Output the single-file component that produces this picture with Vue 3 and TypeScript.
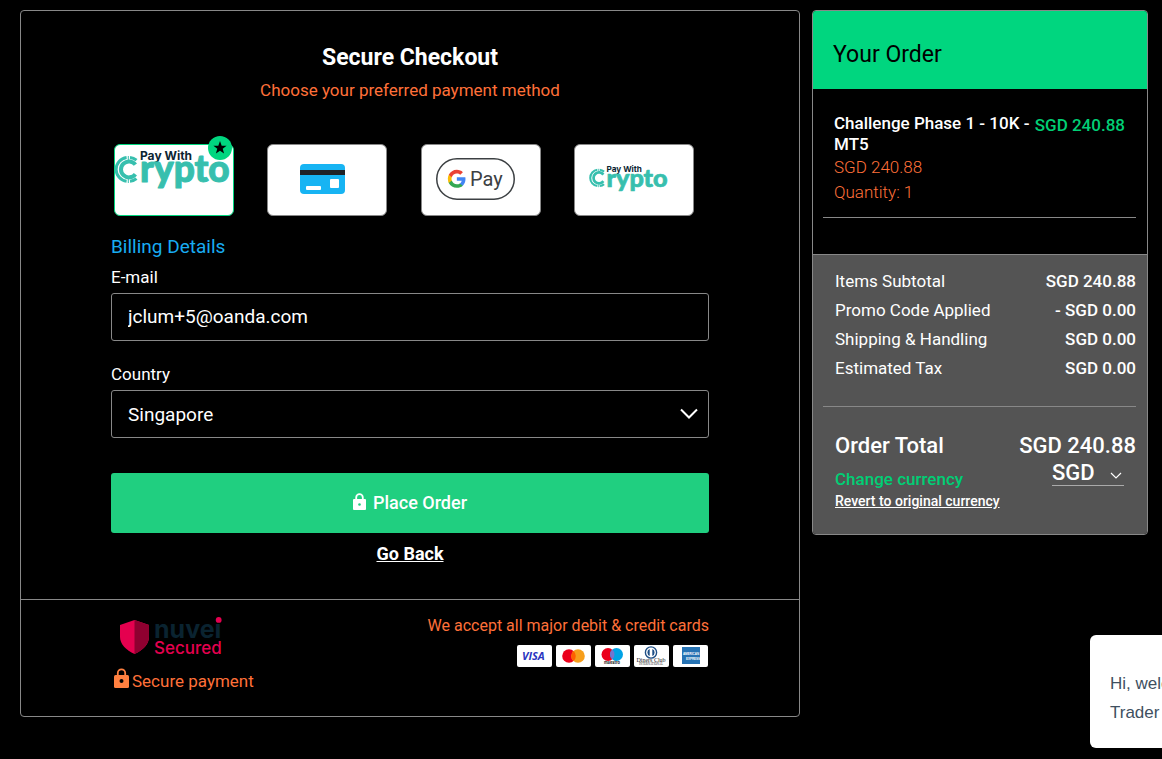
<script setup lang="ts">
import { ref } from 'vue'

type MethodId = 'crypto-preferred' | 'card' | 'gpay' | 'crypto'

interface Method {
  id: MethodId
  label: string
}

interface SummaryRow {
  label: string
  amount: string
}

const methods: Method[] = [
  { id: 'crypto-preferred', label: 'Pay With Crypto (preferred)' },
  { id: 'card', label: 'Credit or debit card' },
  { id: 'gpay', label: 'Google Pay' },
  { id: 'crypto', label: 'Pay With Crypto' },
]

const rows: SummaryRow[] = [
  { label: 'Items Subtotal', amount: 'SGD 240.88' },
  { label: 'Promo Code Applied', amount: '- SGD 0.00' },
  { label: 'Shipping & Handling', amount: 'SGD 0.00' },
  { label: 'Estimated Tax', amount: 'SGD 0.00' },
]

const selected = ref<MethodId>('crypto-preferred')
const email = ref('jclum+5@oanda.com')
const country = ref('Singapore')
const currency = ref('SGD')
</script>

<template>
  <div class="page">
    <main class="checkout">
      <form class="form" @submit.prevent>
        <h1 class="title">Secure Checkout</h1>
        <p class="subtitle">Choose your preferred payment method</p>

        <div class="methods" role="radiogroup" aria-label="Payment method">
          <label
            v-for="m in methods"
            :key="m.id"
            class="method"
            :class="{ active: selected === m.id }"
          >
            <input v-model="selected" class="radio" type="radio" name="method" :value="m.id" :aria-label="m.label" />
            <svg
              v-if="m.id === 'crypto-preferred' || m.id === 'crypto'"
              class="crypto"
              :class="{ large: m.id === 'crypto-preferred' }"
              viewBox="0 0 116 44"
              aria-hidden="true"
            >
              <g fill="none" stroke="#37bfae">
                <path d="M21.500 11.200A12 12 0 0 0 15 8.500M11.600 8.500A12 12 0 0 0 11.600 32.300M15 32.300A12 12 0 0 0 21.500 29.600" stroke-width="3" />
                <path d="M20.400 15.600A8 8 0 1 0 20.400 25.200" stroke-width="4" />
                <path d="M13.300 7v4M13.300 30v4" stroke-width="1" />
              </g>
              <text class="crypto-top" x="25" y="11">Pay With</text>
              <text class="crypto-word" x="25" y="33">rypto</text>
            </svg>
            <svg v-else-if="m.id === 'card'" class="credit" viewBox="0 0 45 30" aria-hidden="true">
              <rect width="45" height="30" rx="4" fill="#17b4f3" />
              <rect y="6" width="45" height="5" fill="#1f2226" />
              <rect x="30" y="15" width="9" height="9" rx="1" fill="#fff" />
              <rect x="6" y="22" width="15" height="4" rx="1" fill="#fff" />
            </svg>
            <svg v-else class="gpay" viewBox="0 0 79 42" aria-hidden="true">
              <rect x="0.75" y="0.75" width="77.5" height="40.500" rx="20.250" fill="#fff" stroke="#3c4043" stroke-width="1.500" />
              <g transform="translate(11 11) scale(0.41)">
                <path fill="#4285f4" d="M45.12 24.5c0-1.56-.14-3.06-.4-4.5H24v8.51h11.84c-.51 2.75-2.06 5.08-4.39 6.64v5.52h7.11c4.16-3.83 6.56-9.47 6.56-16.17z" />
                <path fill="#34a853" d="M24 46c5.94 0 10.92-1.97 14.56-5.33l-7.11-5.52c-1.97 1.32-4.49 2.1-7.45 2.1-5.73 0-10.58-3.87-12.31-9.07H4.34v5.7C7.96 41.07 15.4 46 24 46z" />
                <path fill="#fbbc05" d="M11.69 28.18C11.25 26.86 11 25.45 11 24s.25-2.86.69-4.18v-5.7H4.34C2.85 17.09 2 20.45 2 24c0 3.55.85 6.91 2.34 9.88l7.35-5.7z" />
                <path fill="#ea4335" d="M24 10.75c3.23 0 6.13 1.11 8.41 3.29l6.31-6.31C34.91 4.18 29.93 2 24 2 15.4 2 7.96 6.93 4.34 14.12l7.35 5.7c1.73-5.2 6.58-9.07 12.31-9.07z" />
              </g>
              <text class="gpay-word" x="34" y="28">Pay</text>
            </svg>
            <svg v-if="m.id === 'crypto-preferred'" class="badge" viewBox="0 0 24 24" aria-hidden="true">
              <circle cx="12" cy="12" r="12" fill="#00d67f" />
              <path d="M12 5l1.700 4.700 4.900.1-3.900 3 1.400 4.800L12 14.800l-4.100 2.800 1.400-4.800-3.900-3 4.900-.1z" fill="#000" />
            </svg>
          </label>
        </div>

        <h2 class="billing">Billing Details</h2>

        <label class="label" for="email">E-mail</label>
        <input id="email" v-model="email" class="control email" type="email" />

        <label class="label spaced" for="country">Country</label>
        <div class="select-wrap">
          <select id="country" v-model="country" class="control">
            <option>Singapore</option>
          </select>
          <svg class="chevron" viewBox="0 0 18 12" aria-hidden="true">
            <path d="M1 1.500l8 8 8-8" fill="none" stroke="#fff" stroke-width="2" />
          </svg>
        </div>

        <button class="place" type="submit">
          <svg class="place-lock" viewBox="0 0 13 17" aria-hidden="true">
            <path d="M3.200 7V4.500a3.300 3.300 0 0 1 6.600 0V7" fill="none" stroke="#fff" stroke-width="1.800" />
            <rect y="6" width="13" height="11" rx="1" fill="#fff" />
            <circle cx="6.500" cy="11.500" r="1.300" fill="#20cf80" />
          </svg>
          Place Order
        </button>
        <a class="back" href="#">Go Back</a>
      </form>

      <footer class="footer">
        <div class="secure">
          <svg class="nuvei" viewBox="0 0 106 42" role="img" aria-label="nuvei Secured">
            <path d="M15.500 3L30 8v12c0 7-6 13-14.500 17C7 33 1 27 1 20V8z" fill="#e5004f" />
            <path d="M15.500 3L30 8v12c0 7-6 13-14.500 17z" fill="#8f0030" />
            <text class="nuvei-word" x="35" y="21">nuvei</text>
            <circle cx="99.700" cy="2.900" r="2.900" fill="#e5004f" />
            <text class="nuvei-sub" x="35" y="37">Secured</text>
          </svg>
          <p class="secure-line">
            <svg class="secure-lock" viewBox="0 0 15 20" aria-hidden="true">
              <path d="M3.800 8V5a3.700 3.700 0 0 1 7.400 0v3" fill="none" stroke="#ff8040" stroke-width="1.800" />
              <rect y="7" width="15" height="13" rx="1.500" fill="#ff8040" />
              <circle cx="7.500" cy="13" r="2" fill="#000" />
            </svg>
            Secure payment
          </p>
        </div>
        <div class="accept">
          <p class="accept-text">We accept all major debit &amp; credit cards</p>
          <div class="brands">
            <svg class="brand" viewBox="0 0 35 22" role="img" aria-label="Visa">
              <text class="visa" x="5" y="15">VISA</text>
            </svg>
            <svg class="brand" viewBox="0 0 35 22" role="img" aria-label="Mastercard">
              <circle cx="13" cy="11" r="6.800" fill="#eb001b" />
              <circle cx="22" cy="11" r="6.800" fill="#f79e1b" />
              <path d="M17.500 5.900a6.800 6.800 0 0 1 0 10.200 6.800 6.800 0 0 1 0-10.200z" fill="#ff5f00" />
            </svg>
            <svg class="brand" viewBox="0 0 35 22" role="img" aria-label="Maestro">
              <circle cx="13" cy="9.500" r="6.500" fill="#eb001b" />
              <circle cx="21.500" cy="9.500" r="6.500" fill="#00a2e5" />
              <path d="M17.250 4.600a6.500 6.500 0 0 1 0 9.800 6.500 6.500 0 0 1 0-9.800z" fill="#7375cf" />
              <text class="maestro" x="17" y="19">maestro</text>
            </svg>
            <svg class="brand" viewBox="0 0 35 22" role="img" aria-label="Diners Club International">
              <circle cx="17" cy="7.500" r="5.600" fill="#fff" stroke="#1f4f86" stroke-width="1.400" />
              <path d="M15.700 4a3.800 3.800 0 0 0 0 7zM18.300 4a3.800 3.800 0 0 1 0 7z" fill="#1f4f86" />
              <text class="diners" x="17" y="17">Diners Club</text>
              <text class="diners-sub" x="17" y="20">INTERNATIONAL</text>
            </svg>
            <svg class="brand" viewBox="0 0 35 22" role="img" aria-label="American Express">
              <rect x="9" y="2" width="18" height="17" fill="#2673b4" />
              <text class="amex" x="18" y="10">AMERICAN</text>
              <text class="amex" x="20" y="15">EXPRESS</text>
            </svg>
          </div>
        </div>
      </footer>
    </main>

    <aside class="order">
      <h2 class="order-head">Your Order</h2>
      <section class="item">
        <div class="item-info">
          <h3 class="item-name">Challenge Phase 1 - 10K - MT5</h3>
          <p class="item-meta">SGD 240.88</p>
          <p class="item-meta qty">Quantity: 1</p>
        </div>
        <strong class="item-price">SGD 240.88</strong>
      </section>
      <section class="summary">
        <dl class="rows">
          <div v-for="r in rows" :key="r.label" class="row">
            <dt>{{ r.label }}</dt>
            <dd>{{ r.amount }}</dd>
          </div>
        </dl>
        <div class="total">
          <span>Order Total</span>
          <span>SGD 240.88</span>
        </div>
        <div class="currency">
          <div class="currency-text">
            <label class="change" for="currency">Change currency</label>
            <a class="revert" href="#">Revert to original currency</a>
          </div>
          <div class="currency-pick">
            <select id="currency" v-model="currency" class="currency-select">
              <option>SGD</option>
            </select>
            <svg class="currency-chevron" viewBox="0 0 12 8" aria-hidden="true">
              <path d="M1 1l5 5 5-5" fill="none" stroke="#fff" stroke-width="1.200" />
            </svg>
          </div>
        </div>
      </section>
    </aside>

    <div class="chat">
      <p>Hi, welcome</p>
      <p>Trader</p>
    </div>
  </div>
</template>

<style>
html,
body {
  background: #000;
}
body {
  overflow: hidden;
}
</style>

<style scoped>
* {
  box-sizing: border-box;
}
h1,
h2,
h3,
p,
dl,
dd {
  margin: 0;
}
svg {
  display: block;
  flex: none;
  overflow: visible;
}
.page {
  display: grid;
  grid-template-columns: minmax(0, 1fr) 336px;
  align-items: start;
  gap: 12px;
  padding: 10px 14px 10px 20px;
  background: #000;
  color: #fff;
  font-family: Roboto, 'Liberation Sans', sans-serif;
  font-size: 17px;
  line-height: 20px;
}
.checkout {
  border: 1px solid #888;
  border-radius: 4px;
}
.form {
  display: flex;
  flex-direction: column;
  padding: 33px 90px 33px;
  border-bottom: 1px solid #888;
}
.title {
  font-size: 23px;
  line-height: 28px;
  font-weight: 700;
  text-align: center;
}
.subtitle {
  margin-top: 8px;
  color: #ff7039;
  text-align: center;
}
.methods {
  display: flex;
  justify-content: space-between;
  margin-top: 44px;
  padding: 0 15px 0 3px;
}
.method {
  position: relative;
  display: flex;
  align-items: center;
  width: 120px;
  height: 72px;
  padding: 0 0 2px 14px;
  border: 1px solid #888;
  border-radius: 6px;
  background: #fff;
  cursor: pointer;
}
.method.active {
  border-color: #00d67f;
}
.radio {
  position: absolute;
  inset: 0;
  margin: 0;
  opacity: 0;
}
.crypto {
  width: 80px;
  height: 30px;
}
.method:has(.large) {
  align-items: flex-start;
  padding: 4px 0 0;
}
.crypto.large {
  width: 116px;
  height: 44px;
}
.crypto-top {
  fill: #0b2532;
  font: 700 12px Inter, sans-serif;
}
.crypto-word {
  fill: #37bfae;
  stroke: #37bfae;
  stroke-width: 1px;
  stroke-linejoin: round;
  font: 900 37px Lato, sans-serif;
}
.credit {
  width: 45px;
  height: 30px;
  margin-left: 18px;
}
.gpay {
  width: 79px;
  height: 42px;
}
.gpay-word {
  fill: #3c4043;
  font: 400 20px Roboto, sans-serif;
}
.badge {
  position: absolute;
  top: -9px;
  right: 1px;
  width: 24px;
  height: 24px;
}
.billing {
  margin-top: 19px;
  color: #18acf2;
  font-size: 19px;
  line-height: 24px;
  font-weight: 400;
}
.label {
  margin: 8px 0 6px;
}
.label.spaced {
  margin-top: 23px;
}
.control {
  width: 100%;
  height: 48px;
  padding: 0 16px;
  border: 1px solid #888;
  border-radius: 3px;
  background: #000;
  color: #fff;
  font: 400 19px Roboto, sans-serif;
  appearance: none;
}
.control.email {
  padding-bottom: 2px;
}
.select-wrap {
  position: relative;
}
.chevron {
  position: absolute;
  right: 11px;
  top: 18px;
  width: 18px;
  height: 12px;
  pointer-events: none;
}
.place {
  display: flex;
  align-items: center;
  justify-content: center;
  gap: 7px;
  height: 60px;
  margin-top: 35px;
  padding: 0 6px 2px;
  border: 0;
  border-radius: 3px;
  background: #20cf80;
  color: #fff;
  font: 500 18px Roboto, sans-serif;
}
.place-lock {
  width: 13px;
  height: 17px;
  margin-bottom: 2px;
}
.back {
  align-self: center;
  margin-top: 9px;
  color: #fff;
  font-size: 18px;
  line-height: 24px;
  font-weight: 700;
}
.footer {
  display: flex;
  justify-content: space-between;
  padding: 15px 90px 17px;
  color: #ff7039;
}
.nuvei {
  width: 106px;
  height: 42px;
  margin: 2px 0 0 8px;
}
.nuvei-word {
  fill: #0a2330;
  font: 700 25px Inter, sans-serif;
}
.nuvei-sub {
  fill: #e5004f;
  font: 500 17px Inter, sans-serif;
}
.secure-line {
  display: flex;
  align-items: center;
  gap: 3px;
  margin: 9px 0 5px 3px;
  line-height: 24px;
}
.secure-lock {
  width: 15px;
  height: 20px;
  margin-bottom: 6px;
}
.accept {
  display: flex;
  flex-direction: column;
  align-items: flex-end;
  gap: 9px;
  padding-top: 1px;
  font-size: 16px;
}
.brands {
  display: flex;
  gap: 4px;
  padding-right: 1px;
}
.brand {
  width: 35px;
  height: 22px;
  border-radius: 2px;
  background: #fff;
}
.visa {
  fill: #2a35c0;
  font: italic 700 11px 'Open Sans', sans-serif;
}
.maestro {
  fill: #222;
  font: 700 4px Inter, sans-serif;
  text-anchor: middle;
}
.diners {
  fill: #222;
  font: 400 6px 'Liberation Serif', serif;
  text-anchor: middle;
}
.diners-sub {
  fill: #222;
  font: 400 3px 'Liberation Serif', serif;
  text-anchor: middle;
}
.amex {
  fill: #fff;
  font: 700 3px 'Liberation Sans', sans-serif;
  text-anchor: middle;
}
.order {
  overflow: hidden;
  border: 1px solid #888;
  border-radius: 4px;
}
.order-head {
  padding: 30px 20px 20px;
  background: #00d67f;
  color: #000;
  font-size: 23px;
  line-height: 28px;
  font-weight: 400;
}
.item {
  display: flex;
  justify-content: space-between;
  margin: 0 11px 36px 10px;
  padding: 24px 11px 15px;
  border-bottom: 1px solid #888;
}
.item-name {
  font-size: 17px;
  line-height: 21px;
  font-weight: 500;
}
.item-meta {
  margin-top: 2px;
  color: #ff7039;
  font-weight: 300;
}
.item-meta.qty {
  margin-top: 5px;
}
.item-price {
  flex: none;
  margin-top: 2px;
  color: #00cf75;
  font-weight: 500;
}
.summary {
  padding: 12px 11px 22px 10px;
  border-top: 1px solid #888;
  background: #545454;
}
.rows {
  display: flex;
  flex-direction: column;
  padding: 0 0 23px 12px;
  border-bottom: 1px solid #888;
}
.row {
  display: flex;
  justify-content: space-between;
  line-height: 29px;
}
.row dd {
  font-weight: 500;
}
.total {
  display: flex;
  justify-content: space-between;
  padding: 25px 0 0 12px;
  font-size: 22px;
  line-height: 27px;
  font-weight: 500;
}
.currency {
  display: flex;
  justify-content: space-between;
  padding-left: 12px;
}
.currency-text {
  display: flex;
  flex-direction: column;
  padding-top: 9px;
}
.change {
  line-height: 22px;
  color: #00cf75;
  font-weight: 500;
}
.revert {
  line-height: 22px;
  color: #fff;
  font-size: 14px;
  font-weight: 500;
}
.currency-pick {
  position: relative;
  align-self: flex-start;
  width: 72px;
  margin-right: 12px;
}
.currency-select {
  display: block;
  width: 100%;
  height: 27px;
  padding: 0;
  border: 0;
  border-bottom: 1px solid #aaa;
  background: transparent;
  color: #fff;
  font: 500 22px Roboto, sans-serif;
  appearance: none;
}
.currency-chevron {
  position: absolute;
  right: 2px;
  bottom: 6px;
  width: 12px;
  height: 8px;
  pointer-events: none;
}
.chat {
  position: fixed;
  right: 0;
  bottom: 11px;
  width: 72px;
  padding: 34px 0 21px 20px;
  overflow: hidden;
  border-radius: 6px 0 0 6px;
  background: #fff;
  color: #40505f;
  font-family: 'Liberation Sans', sans-serif;
  font-size: 17px;
  line-height: 29px;
  white-space: nowrap;
}
</style>
